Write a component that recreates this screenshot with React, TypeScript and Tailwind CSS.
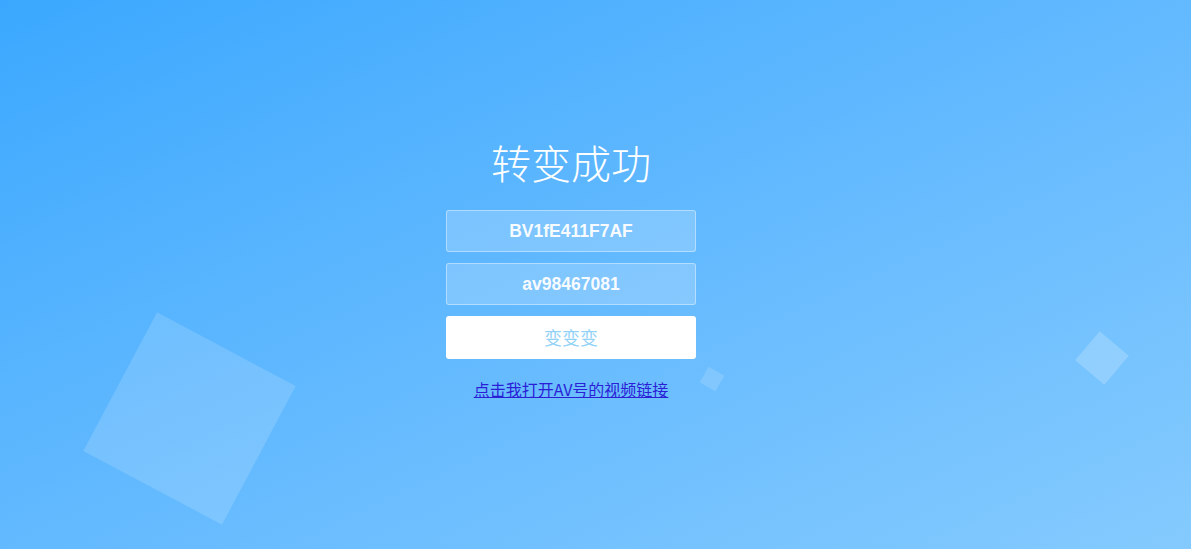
import React from "react";

const cjk = '"Noto Sans CJK SC", "Liberation Sans", sans-serif';

export default function App() {
  return (
    <div
      className="relative h-[549px] w-full overflow-hidden bg-gradient-to-br from-[#3aa8fe] to-[#84cafe]"
      style={{ fontFamily: cjk }}
    >
      {/* floating squares */}
      <div className="absolute left-[111px] top-[340px] h-[157px] w-[157px] rotate-[28deg] bg-white/15" />
      <div className="absolute left-[703px] top-[370px] h-[18px] w-[18px] rotate-[30deg] bg-white/15" />
      <div className="absolute left-[1083px] top-[339px] h-[38px] w-[38px] rotate-[40deg] bg-white/20" />

      <div className="relative flex flex-col items-center pr-[49px] pt-[134px]">
        <h1 className="text-[40px] font-light leading-[56px] text-white">转变成功</h1>

        <form className="mt-[20px] flex w-[250px] flex-col gap-[11px]" onSubmit={(e) => e.preventDefault()}>
          <input
            readOnly
            value="BV1fE411F7AF"
            className="h-[42px] w-full rounded-[3px] border border-white/40 bg-white/20 text-center text-[17.5px] font-bold text-white/95 outline-none"
            style={{ fontFamily: '"Liberation Sans", sans-serif' }}
          />
          <input
            readOnly
            value="av98467081"
            className="h-[42px] w-full rounded-[3px] border border-white/40 bg-white/20 text-center text-[17.5px] font-bold text-white/95 outline-none"
            style={{ fontFamily: '"Liberation Sans", sans-serif' }}
          />
          <button
            type="submit"
            className="h-[43px] w-full rounded-[3px] bg-white text-[18px] text-[#93d2f7]"
          >
            变变变
          </button>
        </form>

        <a href="#" className="mt-[19px] text-[16px] leading-[22px] text-[#2a1fd6] underline">
          点击我打开AV号的视频链接
        </a>
      </div>
    </div>
  );
}
